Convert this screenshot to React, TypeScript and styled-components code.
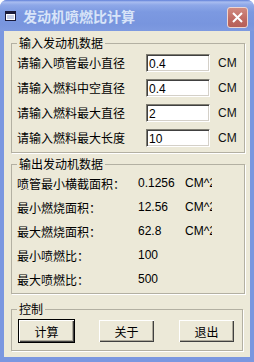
import styled, { createGlobalStyle } from 'styled-components';

const GlobalStyle = createGlobalStyle`
  html, body {
    margin: 0;
    padding: 0;
    background: #ffffff;
  }
  body {
    font-family: "Liberation Sans", "Noto Sans CJK SC", sans-serif;
    font-size: 12px;
    color: #000;
  }
`;

const Window = styled.div`
  width: 254px;
  height: 362px;
  box-sizing: border-box;
  display: flex;
  flex-direction: column;
  background: #7a97e0;
  border-radius: 7px 7px 0 0;
  overflow: hidden;
`;

const TitleBar = styled.div`
  height: 31px;
  flex: none;
  display: flex;
  align-items: center;
  padding: 0 6px 0 5px;
  box-sizing: border-box;
  background: linear-gradient(
    to bottom,
    #5f7fd8 0,
    #a9bdf0 2px,
    #8ea8e8 5px,
    #7c99e1 12px,
    #7895de 24px,
    #7e9ae0 31px
  );
`;

const TitleText = styled.span`
  flex: 1;
  margin-left: 7px;
  font-family: "Noto Sans CJK SC", sans-serif;
  font-weight: bold;
  font-size: 14px;
  color: #d8e4f8;
`;

const CloseButton = styled.div`
  width: 21px;
  height: 21px;
  box-sizing: border-box;
  border: 1px solid #eed5d0;
  border-radius: 3px;
  background: linear-gradient(to bottom, #d08a80, #bf6a62 60%, #b65f58);
  display: flex;
  align-items: center;
  justify-content: center;
  margin-top: 3px;
`;

const Client = styled.div`
  flex: 1;
  margin: 0 4px 5px 4px;
  background: #ece9d8;
  padding-top: 5px;
  box-sizing: border-box;
  display: flex;
  flex-direction: column;
`;

const Group = styled.fieldset<{ $right: number; $gap: number; $bottom: number }>`
  margin: ${(p) => p.$gap}px ${(p) => p.$right}px 0 7px;
  padding: 0 4px ${(p) => p.$bottom}px 5px;
  border: 1px solid #b3b0a2;
  box-shadow: 1px 1px 0 #fff;
  min-width: 0;
`;

const Legend = styled.legend`
  padding: 0 2px;
  font-family: "Noto Sans CJK SC", sans-serif;
  font-size: 12px;
  line-height: 14px;
`;

const InputRow = styled.div`
  display: flex;
  align-items: center;
  height: 25px;
`;

const Label = styled.span`
  width: 129px;
  font-family: "Noto Sans CJK SC", sans-serif;
  font-size: 12px;
  white-space: nowrap;
`;

const Field = styled.div`
  width: 64px;
  height: 18px;
  box-sizing: border-box;
  background: #fff;
  border-top: 1px solid #7f7d72;
  border-left: 1px solid #7f7d72;
  border-right: 1px solid #fff;
  border-bottom: 1px solid #fff;
  box-shadow: inset 1px 1px 0 #404040, inset -1px -1px 0 #d4d0c8;
  padding: 3px 0 0 2px;
  font-size: 12px;
  line-height: 13px;
`;

const Unit = styled.span`
  margin-left: 8px;
  font-size: 12px;
  color: #111;
`;

const OutputRow = styled.div`
  display: grid;
  grid-template-columns: 121px 47px 27px;
  align-items: center;
  height: 24px;
`;

const Value = styled.span`
  font-size: 12px;
`;

/* the unit column is narrower than its text, as in the original dialog */
const ClippedUnit = styled.span`
  font-size: 12px;
  overflow: hidden;
  white-space: nowrap;
`;

const ButtonRow = styled.div`
  display: flex;
  gap: 23px;
  padding-top: 3px;
  padding-left: 1px;
`;

const Button = styled.div<{ $default?: boolean }>`
  width: 57px;
  height: 24px;
  box-sizing: border-box;
  display: flex;
  align-items: center;
  justify-content: center;
  font-family: "Noto Sans CJK SC", sans-serif;
  font-size: 12px;
  background: #ece9d8;
  border: 1px solid ${(p) => (p.$default ? '#000' : 'transparent')};
  box-shadow: inset 1px 1px 0 #fff, inset -1px -1px 0 #404040, inset -2px -2px 0 #aca899;
`;

const inputs = [
  { label: '请输入喷管最小直径', value: '0.4' },
  { label: '请输入燃料中空直径', value: '0.4' },
  { label: '请输入燃料最大直径', value: '2' },
  { label: '请输入燃料最大长度', value: '10' },
];

const outputs = [
  { label: '喷管最小横截面积：', value: '0.1256', unit: 'CM^2' },
  { label: '最小燃烧面积：', value: '12.56', unit: 'CM^2' },
  { label: '最大燃烧面积：', value: '62.8', unit: 'CM^2' },
  { label: '最小喷燃比：', value: '100' },
  { label: '最大喷燃比：', value: '500' },
];

const AppIcon = () => (
  <svg width="11" height="10" viewBox="0 0 11 10">
    <rect x="0.5" y="0.5" width="10" height="9" fill="#fff" stroke="#1a1a3a" />
    <rect x="1" y="1" width="9" height="2" fill="#1a1a3a" />
    <rect x="2" y="4" width="7" height="4" fill="#c8d0e8" />
  </svg>
);

const CloseIcon = () => (
  <svg width="11" height="11" viewBox="0 0 11 11">
    <path d="M1 1 L10 10 M10 1 L1 10" stroke="#fff" strokeWidth="2" />
  </svg>
);

export default function App() {
  return (
    <>
      <GlobalStyle />
      <Window>
        <TitleBar>
          <AppIcon />
          <TitleText>发动机喷燃比计算</TitleText>
          <CloseButton>
            <CloseIcon />
          </CloseButton>
        </TitleBar>
        <Client>
          <Group $right={5} $gap={0} $bottom={2}>
            <Legend>输入发动机数据</Legend>
            {inputs.map((row) => (
              <InputRow key={row.label}>
                <Label>{row.label}</Label>
                <Field>{row.value}</Field>
                <Unit>CM</Unit>
              </InputRow>
            ))}
          </Group>
          <Group $right={5} $gap={4} $bottom={2}>
            <Legend>输出发动机数据</Legend>
            {outputs.map((row) => (
              <OutputRow key={row.label}>
                <Label>{row.label}</Label>
                <Value>{row.value}</Value>
                {row.unit && <ClippedUnit>{row.unit}</ClippedUnit>}
              </OutputRow>
            ))}
          </Group>
          <Group $right={7} $gap={8} $bottom={7}>
            <Legend>控制</Legend>
            <ButtonRow>
              <Button $default>计算</Button>
              <Button>关于</Button>
              <Button>退出</Button>
            </ButtonRow>
          </Group>
        </Client>
      </Window>
    </>
  );
}
